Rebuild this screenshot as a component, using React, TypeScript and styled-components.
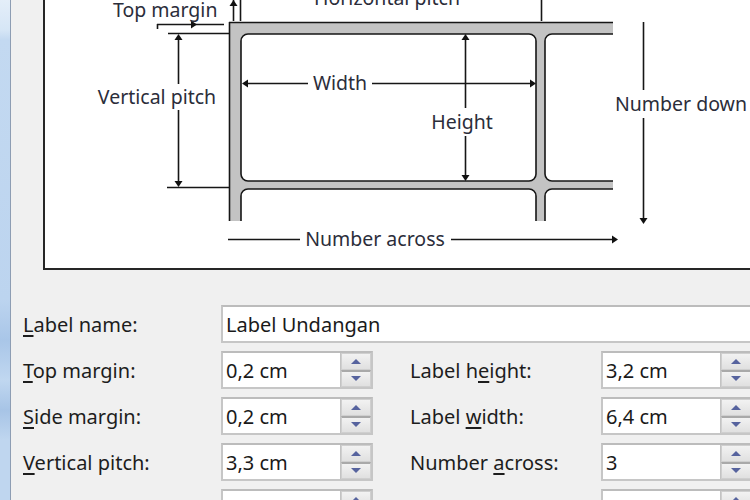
import React from "react";
import styled, { createGlobalStyle } from "styled-components";

const GlobalStyle = createGlobalStyle`
  html, body {
    margin: 0;
    padding: 0;
    background: #f0f0f0;
    overflow: hidden;
  }
  body {
    font-family: "Noto Sans", "Open Sans", sans-serif;
  }
`;

const Screen = styled.div`
  display: flex;
  width: 750px;
  height: 500px;
  overflow: hidden;
`;

const WindowEdge = styled.div`
  flex: 0 0 10px;
  background: linear-gradient(
    to bottom,
    #e4eef9 0px,
    #d6e6f6 30px,
    #c3d9f1 40px,
    #bcd4ef 300px,
    #a9c6e8 340px,
    #c0d7f0 380px,
    #a7c4e6 410px,
    #bfd6ef 440px
  );
  border-right: 1px solid #8d9db3;
`;

const Dialog = styled.div`
  flex: 1;
  min-width: 0;
  background: #f0f0f0;
  overflow: hidden;
`;

const PreviewBox = styled.div`
  margin-left: 32px;
  width: 780px;
  height: 268px;
  background: #fff;
  border-left: 2px solid #262626;
  border-bottom: 2px solid #262626;
`;

const Form = styled.div`
  display: grid;
  grid-template-columns: 198px 152px 37px 191px 152px;
  grid-auto-rows: 38px;
  row-gap: 8px;
  margin-top: 35px;
  padding-left: 12px;
  width: 800px;
`;

const FieldLabel = styled.div<{ $col: number }>`
  grid-column: ${({ $col }) => $col};
  display: flex;
  align-items: center;
  font-size: 20px;
  color: #1d1d1d;
  white-space: nowrap;

  u {
    text-decoration-thickness: 1.5px;
    text-underline-offset: 3px;
  }
`;

const TextBox = styled.div<{ $col: number; $wide?: boolean }>`
  grid-column: ${({ $col, $wide }) => ($wide ? `${$col} / -1` : $col)};
  display: flex;
  align-items: stretch;
  box-sizing: border-box;
  background: #fff;
  border: 2px solid #c6c6c6;
  border-top-color: #bcbcbc;
  ${({ $wide }) => ($wide ? "margin-right: -80px;" : "")}
`;

const Value = styled.div`
  flex: 1;
  display: flex;
  align-items: center;
  padding-left: 3px;
  font-size: 20px;
  color: #1a1a1a;
  white-space: nowrap;
`;

const Spinner = styled.div`
  flex: 0 0 30px;
  display: flex;
  flex-direction: column;
  border-left: 1px solid #c3c3c3;
  background: #e2e2e2;
`;

const SpinButton = styled.div<{ $down?: boolean }>`
  flex: 1;
  display: flex;
  align-items: center;
  justify-content: center;
  background: linear-gradient(to bottom, #f2f2f2, #e0e0e0);
  border: 1px solid #cfcfcf;
  ${({ $down }) => ($down ? "border-top: 2px solid #a9a9a9;" : "")}
`;

const Arrow = styled.span<{ $down?: boolean }>`
  width: 0;
  height: 0;
  border-left: 5px solid transparent;
  border-right: 5px solid transparent;
  ${({ $down }) =>
    $down
      ? "border-top: 5px solid #56639e;"
      : "border-bottom: 5px solid #56639e;"}
`;

const Diagram = styled.svg`
  display: block;
  font-family: "Noto Sans", "Open Sans", sans-serif;
`;

function Head({ x, y, dir }: { x: number; y: number; dir: "up" | "down" | "left" | "right" }) {
  const s = 6;
  const w = 4;
  let pts = "";
  if (dir === "up") pts = `${x},${y} ${x - w},${y + s} ${x + w},${y + s}`;
  if (dir === "down") pts = `${x},${y} ${x - w},${y - s} ${x + w},${y - s}`;
  if (dir === "left") pts = `${x},${y} ${x + s},${y - w} ${x + s},${y + w}`;
  if (dir === "right") pts = `${x},${y} ${x - s},${y - w} ${x - s},${y + w}`;
  return <polygon points={pts} fill="#111" />;
}

function LabelDiagram() {
  const ink = "#161616";
  const txt = "#2b2d3a";
  return (
    <Diagram width="748" height="268" viewBox="45 0 748 268">
      <defs>
        <clipPath id="sheet">
          <rect x="229" y="22" width="384" height="199" />
        </clipPath>
      </defs>

      {/* label sheet */}
      <g clipPath="url(#sheet)">
        <rect x="229" y="22" width="384" height="199" fill="#c3c3c3" />
        <rect x="241" y="34" width="295" height="147" rx="7" fill="#fff" stroke={ink} strokeWidth="1.6" />
        <rect x="545" y="34" width="300" height="147" rx="7" fill="#fff" stroke={ink} strokeWidth="1.6" />
        <rect x="241" y="189" width="295" height="200" rx="7" fill="#fff" stroke={ink} strokeWidth="1.6" />
        <rect x="545" y="189" width="300" height="200" rx="7" fill="#fff" stroke={ink} strokeWidth="1.6" />
      </g>
      <g stroke={ink} strokeWidth="1.6" fill="none">
        <line x1="229" y1="22.5" x2="613" y2="22.5" />
        <line x1="229.5" y1="22" x2="229.5" y2="221" />

        {/* top margin / horizontal pitch ticks */}
        <line x1="157" y1="24.5" x2="224" y2="24.5" />
        <line x1="157.5" y1="24" x2="157.5" y2="29" />
        <line x1="233.5" y1="0" x2="233.5" y2="21" />
        <line x1="240.5" y1="0" x2="240.5" y2="21" />
        <line x1="541.5" y1="0" x2="541.5" y2="21" />

        {/* vertical pitch */}
        <line x1="168" y1="33.5" x2="229" y2="33.5" />
        <line x1="167" y1="187.5" x2="229" y2="187.5" />
        <line x1="178.5" y1="36" x2="178.5" y2="84" />
        <line x1="178.5" y1="110" x2="178.5" y2="184" />

        {/* width */}
        <line x1="244" y1="83.5" x2="308" y2="83.5" />
        <line x1="372" y1="83.5" x2="533" y2="83.5" />

        {/* height */}
        <line x1="465.5" y1="37" x2="465.5" y2="108" />
        <line x1="465.5" y1="136" x2="465.5" y2="178" />

        {/* number down */}
        <line x1="643.5" y1="22" x2="643.5" y2="90" />
        <line x1="643.5" y1="118" x2="643.5" y2="218" />

        {/* number across */}
        <line x1="228" y1="239.5" x2="300" y2="239.5" />
        <line x1="451" y1="239.5" x2="613" y2="239.5" />
      </g>

      <Head x={197} y={24.5} dir="right" />
      <Head x={233.5} y={0} dir="up" />
      <Head x={178.5} y={34} dir="up" />
      <Head x={178.5} y={187} dir="down" />
      <Head x={242} y={83.5} dir="left" />
      <Head x={536} y={83.5} dir="right" />
      <Head x={465.5} y={34} dir="up" />
      <Head x={465.5} y={181} dir="down" />
      <Head x={643.5} y={224} dir="down" />
      <Head x={618} y={239.5} dir="right" />

      <g fill={txt} fontSize="19.5">
        <text x="387" y="5" textAnchor="middle">Horizontal pitch</text>
        <text x="113" y="17">Top margin</text>
        <text x="157" y="104" textAnchor="middle">Vertical pitch</text>
        <text x="340" y="90" textAnchor="middle">Width</text>
        <text x="462" y="129" textAnchor="middle">Height</text>
        <text x="681" y="111" textAnchor="middle">Number down</text>
        <text x="375" y="246" textAnchor="middle">Number across</text>
      </g>
    </Diagram>
  );
}

function Spin() {
  return (
    <Spinner>
      <SpinButton>
        <Arrow />
      </SpinButton>
      <SpinButton $down>
        <Arrow $down />
      </SpinButton>
    </Spinner>
  );
}

type Row = {
  left: React.ReactNode;
  leftValue: string;
  right: React.ReactNode;
  rightValue: string;
};

const rows: Row[] = [
  {
    left: (<><u>T</u>op margin:</>),
    leftValue: "0,2 cm",
    right: (<>Label h<u>e</u>ight:</>),
    rightValue: "3,2 cm",
  },
  {
    left: (<><u>S</u>ide margin:</>),
    leftValue: "0,2 cm",
    right: (<>Label <u>w</u>idth:</>),
    rightValue: "6,4 cm",
  },
  {
    left: (<><u>V</u>ertical pitch:</>),
    leftValue: "3,3 cm",
    right: (<>Number <u>a</u>cross:</>),
    rightValue: "3",
  },
  {
    left: (<>H<u>o</u>rizontal pitch:</>),
    leftValue: "6,6 cm",
    right: (<>Number <u>d</u>own:</>),
    rightValue: "8",
  },
];

export default function App() {
  return (
    <>
      <GlobalStyle />
      <Screen>
        <WindowEdge />
        <Dialog>
          <PreviewBox>
            <LabelDiagram />
          </PreviewBox>
          <Form>
            <FieldLabel $col={1}>
              <span>
                <u>L</u>abel name:
              </span>
            </FieldLabel>
            <TextBox $col={2} $wide>
              <Value>Label Undangan</Value>
            </TextBox>
            {rows.map((r, i) => (
              <React.Fragment key={i}>
                <FieldLabel $col={1}>
                  <span>{r.left}</span>
                </FieldLabel>
                <TextBox $col={2}>
                  <Value>{r.leftValue}</Value>
                  <Spin />
                </TextBox>
                <FieldLabel $col={4}>
                  <span>{r.right}</span>
                </FieldLabel>
                <TextBox $col={5}>
                  <Value>{r.rightValue}</Value>
                  <Spin />
                </TextBox>
              </React.Fragment>
            ))}
          </Form>
        </Dialog>
      </Screen>
    </>
  );
}
